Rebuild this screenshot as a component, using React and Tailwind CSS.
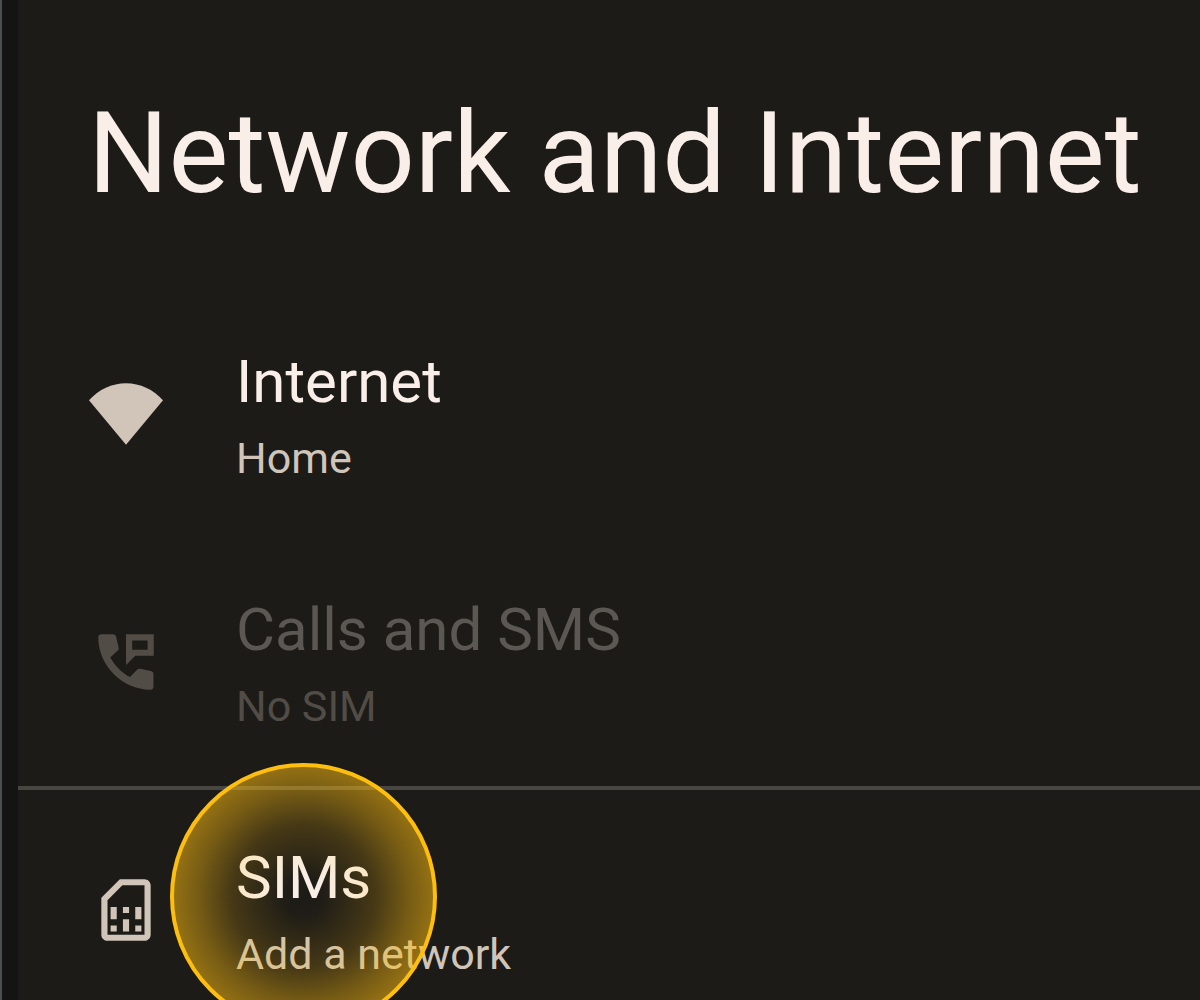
function WifiIcon() {
  return (
    <svg viewBox="0 0 24 24" className="size-full" fill="currentColor" aria-hidden="true">
      <path d="M12 22 0 7.5C3.2 4 7.4 2 12 2s8.8 2 12 5.5z" />
    </svg>
  );
}

function CallsIcon() {
  return (
    <svg viewBox="0 0 24 24" className="size-full" fill="currentColor" aria-hidden="true">
      <path d="M4 3h3.8c.5 0 .9.3 1 .8l.8 3.5c.1.4 0 .7-.3 1l-2.4 2.2c1.5 2.7 3.7 4.9 6.4 6.4l2.3-2.4c.3-.3.6-.4 1-.3l3.5.7c.5.1.8.5.8 1V20c0 .6-.4 1-1 1C10.8 21 3 13.2 3 4c0-.6.4-1 1-1z" />
      <path fillRule="evenodd" d="M12 3h9v7h-6l-3 3zM14 5v3h5V5z" />
    </svg>
  );
}

function SimIcon() {
  return (
    <svg viewBox="0 0 24 24" className="size-full" fill="currentColor" aria-hidden="true">
      <path d="M18 2h-8L4 8v12c0 1.1.9 2 2 2h12c1.1 0 2-.9 2-2V4c0-1.1-.9-2-2-2zm0 2v16H6V8.83L10.83 4H18zM7 17h2v2H7zm8 0h2v2h-2zM7 11h2v4H7zm4 4h2v4h-2zm0-4h2v2h-2zm4 0h2v4h-2z" />
    </svg>
  );
}

function SettingRow({ icon, title, subtitle, disabled }) {
  return (
    <button
      type="button"
      disabled={disabled}
      className="flex h-[248px] w-full items-center gap-[73px] pl-[71px] text-left text-[#d0c5b8] disabled:text-[#514c46]"
    >
      <span className="size-[74px] shrink-0">{icon}</span>
      <span className="flex flex-col gap-3 pt-1 whitespace-nowrap">
        <span className={disabled ? "text-[60px] leading-[72px] text-[#5b5752]" : "text-[60px] leading-[72px] text-[#f9efe8]"}>
          {title}
        </span>
        <span className="text-[43px] leading-[56px]">{subtitle}</span>
      </span>
    </button>
  );
}

export default function App() {
  return (
    <div className="flex h-screen overflow-hidden bg-[#1d1b17] font-['Roboto',sans-serif]">
      <div className="w-[18px] shrink-0 border-l-2 border-[#4b4e50] bg-[#141414]" />
      <main className="min-w-0 flex-1">
        <h1 className="pt-[90px] pb-[72px] pl-[70px] text-[113px] leading-[128px] whitespace-nowrap text-[#f9efe8]">
          Network and Internet
        </h1>
        <SettingRow icon={<WifiIcon />} title="Internet" subtitle="Home" />
        <SettingRow icon={<CallsIcon />} title="Calls and SMS" subtitle="No SIM" disabled />
        <section className="relative">
          <hr className="-mb-1 h-1 border-0 bg-[#474641]" />
          <SettingRow icon={<SimIcon />} title="SIMs" subtitle="Add a network" />
          <div className="pointer-events-none absolute -top-[23px] left-[152px] size-[267px] rounded-full border-4 border-[#fdbe10] bg-[radial-gradient(circle_closest-side,rgba(255,190,16,0)_0%,rgba(255,190,16,0.01)_15%,rgba(255,190,16,0.18)_55%,rgba(255,190,16,0.4)_82%,rgba(255,190,16,0.52)_100%)]" />
        </section>
      </main>
    </div>
  );
}
